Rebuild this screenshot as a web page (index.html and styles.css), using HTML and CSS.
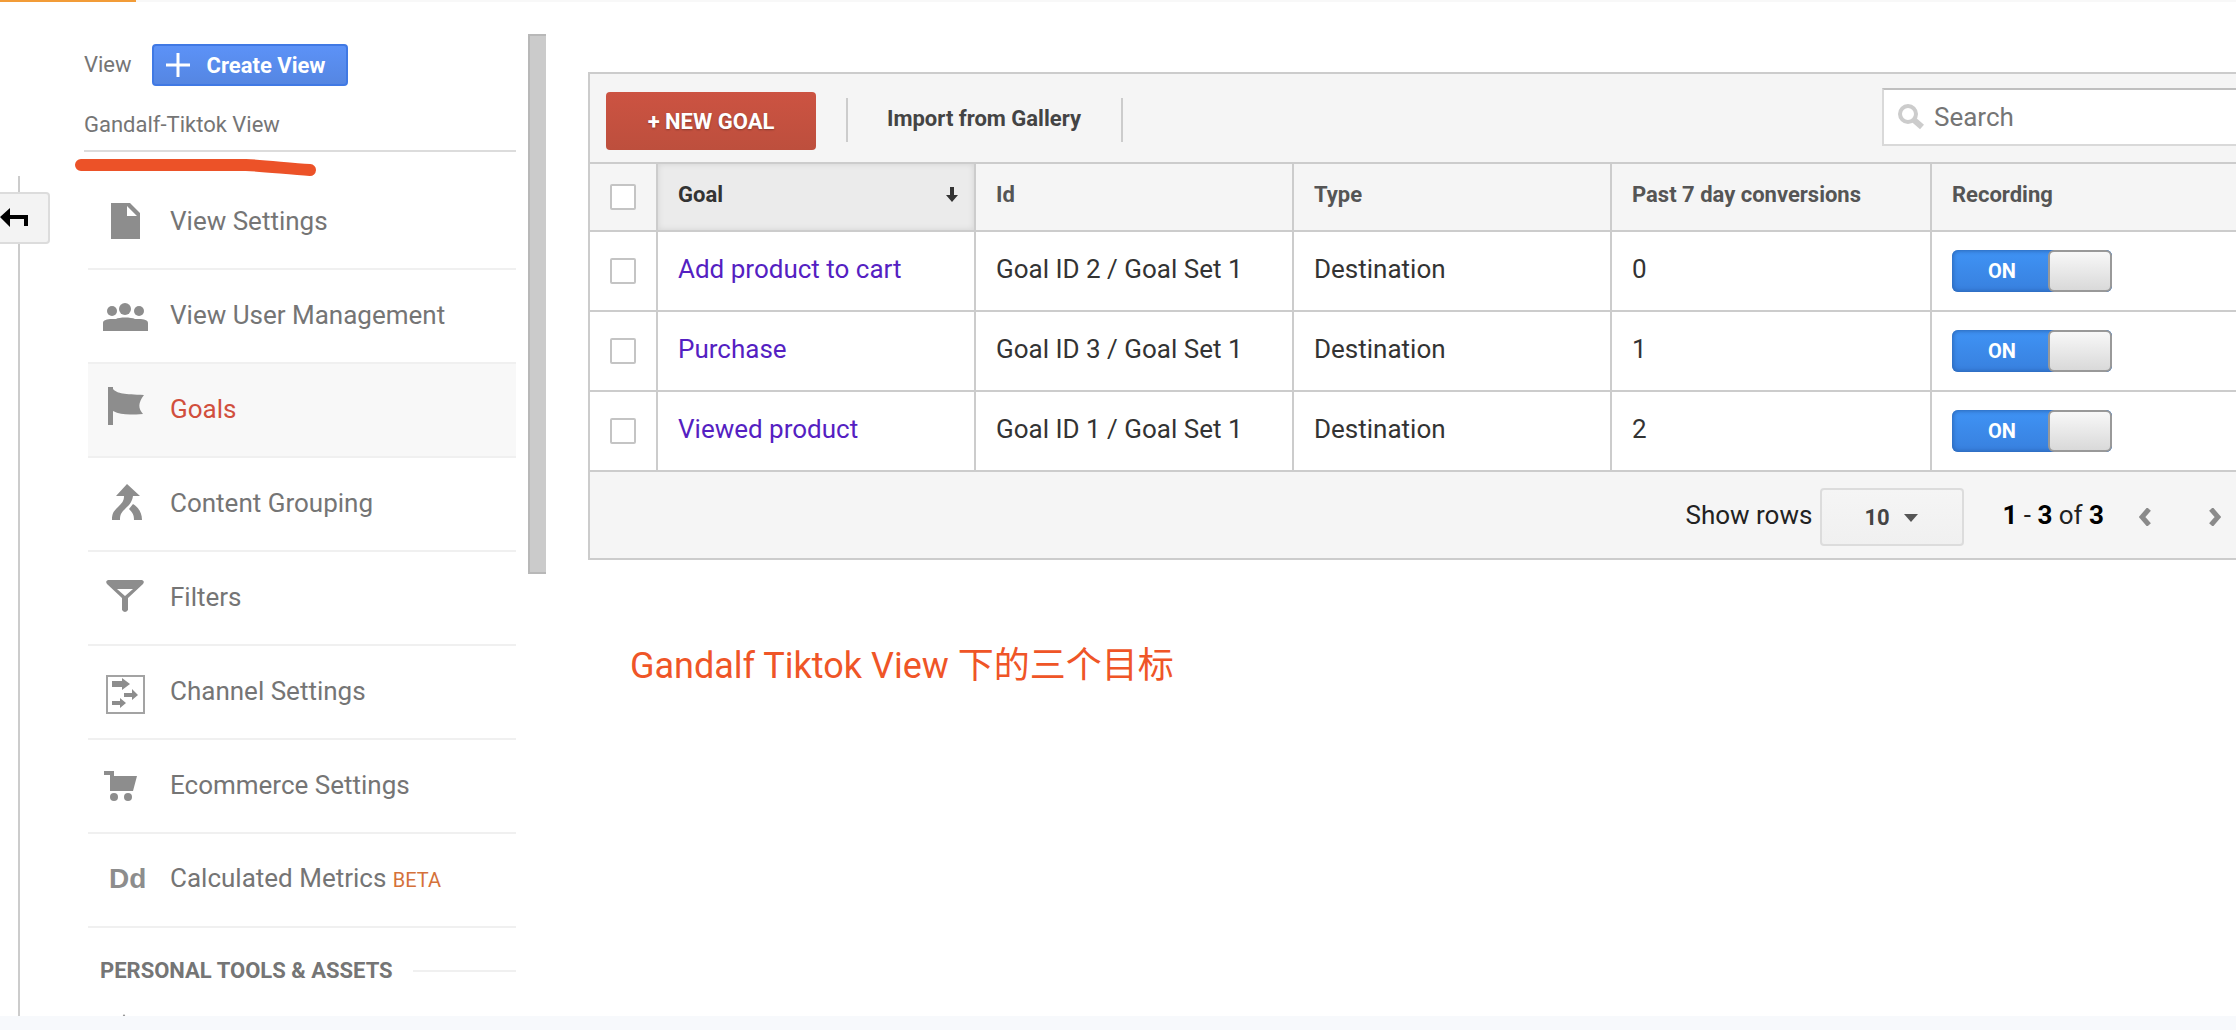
FILE: index.html
```html
<!DOCTYPE html>
<html lang="en">
<head>
    <meta charset="UTF-8">
    <meta name="viewport" content="width=device-width, initial-scale=1.0">
    <title>Goals</title>
    <link rel="stylesheet" href="styles.css">
</head>
<body>
    <div class="progress"><div class="progress-bar"></div></div>

    <div class="page">
        <div class="rail">
            <span class="rail-line rail-line-top"></span>
            <button type="button" class="rail-button" aria-label="Back">
                <svg width="30" height="20" viewBox="0 0 30 20">
                    <path d="M0 9L10 0V7H28V18H24V11H10V19Z" fill="#000"/>
                </svg>
            </button>
            <span class="rail-line"></span>
        </div>

        <aside class="sidebar">
            <div class="view-header">
                <span>View</span>
                <button type="button" class="create-view">
                    <svg width="24" height="24" viewBox="0 0 24 24">
                        <path d="M12 0V24M0 12H24" stroke="#fff" stroke-width="3"/>
                    </svg>
                    Create View
                </button>
            </div>
            <div class="view-name">
                Gandalf-Tiktok View
                <!-- Marker stroke under the view name -->
                <svg class="marker" width="244" height="20" viewBox="0 0 244 20">
                    <path d="M7 7H172C195 8 215 11 236 12" fill="none" stroke="#ec5228" stroke-width="12" stroke-linecap="round" stroke-linejoin="round"/>
                </svg>
            </div>

            <nav class="menu">
                <a href="#" class="menu-item">
                    <svg class="icon" viewBox="0 0 48 48">
                        <path d="M10 6H29L39 16V42H10ZM26 9V19H36Z" fill-rule="evenodd"/>
                    </svg>
                    View Settings
                </a>
                <a href="#" class="menu-item">
                    <svg class="icon" viewBox="0 0 48 48">
                        <circle cx="11" cy="20" r="5"/>
                        <circle cx="24" cy="18" r="6"/>
                        <circle cx="38" cy="20" r="5"/>
                        <path d="M2 40V32C2 29 6 28 11 28L15 28C18 26 30 26 34 28L38 28C43 28 47 29 47 32V40Z"/>
                    </svg>
                    View User Management
                </a>
                <a href="#" class="menu-item active">
                    <svg class="icon" viewBox="0 0 48 48">
                        <path d="M7 2H12V4C17 9 23 9 43 10C37 18 37 23 42 29C27 30 20 30 12 26V40H7Z"/>
                    </svg>
                    Goals
                </a>
                <a href="#" class="menu-item">
                    <svg class="icon" viewBox="0 0 48 48">
                        <path d="M26 5L39 17H32C31 24 27 27 23 31C20 34 19 36 19 41H11C11 34 13 32 17 28C21 24 23 22 23 17H15ZM32 25C38 29 41 34 41 41H33C33 36 32 34 28 30Z"/>
                    </svg>
                    Content Grouping
                </a>
                <a href="#" class="menu-item">
                    <svg class="icon" viewBox="0 0 48 48">
                        <path d="M7 7H41Q44 8 42 11L27 25V37Q24 41 21 37V25L6 11Q4 8 7 7ZM16 16L24 23L32 16Z" fill-rule="evenodd"/>
                    </svg>
                    Filters
                </a>
                <a href="#" class="menu-item">
                    <svg class="icon" viewBox="0 0 48 48">
                        <rect x="6" y="9" width="37" height="37" fill="none" stroke="#a3a3a3" stroke-width="2"/>
                        <path d="M11 14H21V11L29 17L21 23V20H11ZM23 26H31V22L37 28L31 33V30H23ZM11 34H19V31L25 36L19 41V38H11Z"/>
                    </svg>
                    Channel Settings
                </a>
                <a href="#" class="menu-item">
                    <svg class="icon" viewBox="0 0 48 48">
                        <path d="M3 10H13V15H36L32 30H9V14H3Z"/>
                        <circle cx="13" cy="36" r="4"/>
                        <circle cx="27" cy="36" r="4"/>
                    </svg>
                    Ecommerce Settings
                </a>
                <a href="#" class="menu-item">
                    <span class="icon icon-text">Dd</span>
                    <span>Calculated Metrics <small class="beta">BETA</small></span>
                </a>
            </nav>

            <h2 class="section-title">Personal Tools &amp; Assets</h2>
            <a href="#" class="menu-item" aria-label="Segments">
                <svg class="icon" viewBox="0 0 48 48">
                    <path d="M27 6L32 14V40H22V14Z"/>
                </svg>
            </a>
        </aside>

        <div class="scrollbar"></div>

        <main class="content">
            <section class="panel">
                <div class="toolbar">
                    <button type="button" class="new-goal">+ NEW GOAL</button>
                    <button type="button" class="import">Import from Gallery</button>
                    <label class="search">
                        <svg width="26" height="26" viewBox="0 0 26 26">
                            <circle cx="10" cy="10" r="8" fill="none" stroke="#ccc" stroke-width="4"/>
                            <path d="M16 16L24 23" stroke="#ccc" stroke-width="6"/>
                        </svg>
                        <input type="text" placeholder="Search" aria-label="Search">
                    </label>
                </div>

                <table class="goals">
                    <thead>
                        <tr>
                            <th class="col-check"><input type="checkbox" class="check" aria-label="Select all"></th>
                            <th class="col sorted">
                                <div class="sort">
                                    Goal
                                    <svg width="12" height="16" viewBox="0 0 12 16">
                                        <path d="M4 0H8V8H12L6 15L0 8H4Z" fill="#333"/>
                                    </svg>
                                </div>
                            </th>
                            <th class="col">Id</th>
                            <th class="col">Type</th>
                            <th class="col-wide">Past 7 day conversions</th>
                            <th>Recording</th>
                        </tr>
                    </thead>
                    <tbody>
                        <tr>
                            <td class="col-check"><input type="checkbox" class="check" aria-label="Select Add product to cart"></td>
                            <td><a href="#">Add product to cart</a></td>
                            <td>Goal ID 2 / Goal Set 1</td>
                            <td>Destination</td>
                            <td>0</td>
                            <td class="col-toggle">
                                <label class="toggle"><input type="checkbox" checked><span class="toggle-text">ON</span><span class="knob"></span></label>
                            </td>
                        </tr>
                        <tr>
                            <td class="col-check"><input type="checkbox" class="check" aria-label="Select Purchase"></td>
                            <td><a href="#">Purchase</a></td>
                            <td>Goal ID 3 / Goal Set 1</td>
                            <td>Destination</td>
                            <td>1</td>
                            <td class="col-toggle">
                                <label class="toggle"><input type="checkbox" checked><span class="toggle-text">ON</span><span class="knob"></span></label>
                            </td>
                        </tr>
                        <tr>
                            <td class="col-check"><input type="checkbox" class="check" aria-label="Select Viewed product"></td>
                            <td><a href="#">Viewed product</a></td>
                            <td>Goal ID 1 / Goal Set 1</td>
                            <td>Destination</td>
                            <td>2</td>
                            <td class="col-toggle">
                                <label class="toggle"><input type="checkbox" checked><span class="toggle-text">ON</span><span class="knob"></span></label>
                            </td>
                        </tr>
                    </tbody>
                </table>

                <div class="pager">
                    <label for="rows">Show rows</label>
                    <div class="select">
                        <select id="rows">
                            <option>10</option>
                            <option>25</option>
                            <option>50</option>
                        </select>
                        <svg class="caret" width="14" height="8" viewBox="0 0 14 8"><path d="M0 0H14L7 8Z" fill="#555"/></svg>
                    </div>
                    <span class="range"><b>1</b> - <b>3</b> of <b>3</b></span>
                    <button type="button" class="page-button" aria-label="Previous page">
                        <svg width="12" height="18" viewBox="0 0 12 18"><path d="M10 1L3 9L10 17" fill="none" stroke="#8a8a8a" stroke-width="5"/></svg>
                    </button>
                    <button type="button" class="page-button" aria-label="Next page">
                        <svg width="12" height="18" viewBox="0 0 12 18"><path d="M2 1L9 9L2 17" fill="none" stroke="#8a8a8a" stroke-width="5"/></svg>
                    </button>
                </div>
            </section>

            <p class="note">Gandalf Tiktok View 下的三个目标</p>
        </main>
    </div>

    <footer class="bottom"></footer>
</body>
</html>
```
FILE: styles.css
```css
/* Reset and general styling */
* {
    margin: 0;
    padding: 0;
    box-sizing: border-box;
}

body {
    display: flex;
    flex-direction: column;
    height: 100vh;
    overflow: hidden;
    background: #fff;
    color: #333;
    font-family: Roboto, "Noto Sans CJK SC", sans-serif;
    font-size: 26px;
    line-height: 32px;
}

button,
input,
select {
    font-family: inherit;
    border: none;
    cursor: pointer;
}

a {
    text-decoration: none;
}

.progress {
    height: 2px;
    background: #f8f8f8;
    flex: none;
}

.progress-bar {
    width: 136px;
    height: 2px;
    background: #f29c38;
}

.page {
    display: flex;
    flex: 1;
    min-height: 0;
}

.bottom {
    flex: none;
    height: 14px;
    background: #f7f9fc;
}

/* Left rail */
.rail {
    display: flex;
    flex-direction: column;
    width: 50px;
    padding-top: 174px;
}

.rail-line {
    flex: 1;
    width: 2px;
    margin-left: 18px;
    background: #ccc;
}

.rail-line-top {
    flex: none;
    height: 16px;
}

.rail-button {
    display: flex;
    align-items: center;
    height: 52px;
    background: #f3f3f3;
    border: 2px solid #dcdcdc;
    border-left: none;
    border-radius: 0 4px 4px 0;
}

/* Sidebar */
.sidebar {
    width: 478px;
    padding: 42px 12px 0 34px;
    overflow: hidden;
    color: #757575;
}

.view-header {
    display: flex;
    align-items: center;
    gap: 20px;
    font-size: 22px;
}

.create-view {
    display: flex;
    align-items: center;
    gap: 17px;
    height: 42px;
    padding: 0 20px 0 12px;
    border: 2px solid #4079e4;
    border-radius: 4px;
    background: linear-gradient(#5c92f7, #5586e2);
    color: #fff;
    font-size: 22px;
    font-weight: 700;
}

.view-name {
    position: relative;
    margin-top: 23px;
    padding-bottom: 9px;
    border-bottom: 2px solid #dcdcdc;
    font-size: 22px;
}

.marker {
    position: absolute;
    left: -10px;
    top: 49px;
}

.menu {
    margin: 24px 0 0 4px;
}

.menu-item {
    display: flex;
    align-items: center;
    gap: 21px;
    height: 94px;
    padding: 0 0 2px 13px;
    border-bottom: 2px solid #f0f0f0;
    color: #757575;
}

.menu-item.active {
    background: #f8f8f8;
    color: #d14f3d;
}

.icon {
    flex: none;
    width: 48px;
    height: 48px;
    fill: #8d8d8d;
}

.icon-text {
    padding-left: 8px;
    color: #8d8d8d;
    font-family: "Liberation Sans", sans-serif;
    font-size: 28px;
    font-weight: 700;
    line-height: 48px;
}

.beta {
    color: #d5713a;
    font-size: 20px;
}

.section-title {
    display: flex;
    align-items: center;
    gap: 20px;
    margin: 27px 0 0 16px;
    font-size: 22px;
    text-transform: uppercase;
}

.section-title::after {
    content: "";
    flex: 1;
    height: 2px;
    background: #f0f0f0;
}

.scrollbar {
    flex: none;
    width: 18px;
    height: 540px;
    margin-top: 32px;
    background: #cbcbcb;
    border: 2px solid #b8b8b8;
    border-right: none;
}

/* Goals panel */
.content {
    flex: 1;
    min-width: 0;
    padding: 70px 0 0 42px;
}

.panel {
    border: 2px solid #ccc;
    border-right: none;
    background: #f5f5f5;
}

.toolbar {
    display: flex;
    height: 88px;
    padding: 14px 0 14px 16px;
}

.new-goal {
    width: 210px;
    height: 58px;
    margin: 4px 30px 0 0;
    border-radius: 4px;
    background: linear-gradient(#cc5342, #bd4f3d);
    color: #fff;
    font-size: 22px;
    font-weight: 700;
    text-shadow: 0 1px 2px rgba(0, 0, 0, 0.3);
}

.import {
    height: 44px;
    margin-top: 10px;
    padding: 0 40px 4px 39px;
    border-left: 2px solid #ccc;
    border-right: 2px solid #ccc;
    background: none;
    color: #444;
    font-size: 22px;
    font-weight: 700;
}

.search {
    display: flex;
    align-items: center;
    gap: 10px;
    width: 354px;
    height: 58px;
    margin-left: auto;
    padding-left: 14px;
    border: 2px solid #d9d9d9;
    border-top-color: #c0c0c0;
    border-right: none;
    background: #fff;
}

.search input {
    flex: 1;
    min-width: 0;
    outline: none;
    background: none;
    font-size: 26px;
}

.search input::placeholder {
    color: #757575;
}

.goals {
    width: 100%;
    border-spacing: 0;
    table-layout: fixed;
}

.goals th,
.goals td {
    padding: 0 20px 4px;
    border-top: 2px solid #ccc;
    border-left: 2px solid #ccc;
    text-align: left;
}

.goals th {
    height: 68px;
    color: #555;
    font-size: 22px;
}

.goals td {
    height: 80px;
    background: #fff;
}

.goals .col-check {
    width: 66px;
    padding: 0;
    border-left: none;
    text-align: center;
}

.goals .col-toggle {
    padding-bottom: 0;
}

.goals .col {
    width: 318px;
}

.goals .col-wide {
    width: 320px;
}

.goals .sorted {
    padding-right: 16px;
    background: #ebebeb;
    box-shadow: inset 0 0 6px rgba(0, 0, 0, 0.1);
    color: #333;
}

.sort {
    display: flex;
    align-items: center;
    justify-content: space-between;
}

.goals a {
    color: #551fc2;
}

.check {
    display: block;
    appearance: none;
    width: 26px;
    height: 26px;
    margin: 0 auto;
    border: 2px solid #c4c4c4;
    border-radius: 2px;
    background: #fff;
}

/* On / off switch */
.toggle {
    display: flex;
    align-items: center;
    width: 160px;
    height: 42px;
    border-radius: 6px;
    background: linear-gradient(#3f93f5, #3880de);
    box-shadow: inset 0 0 4px 1px #2a66b5;
    cursor: pointer;
}

.toggle input {
    appearance: none;
}

.toggle-text {
    flex: 1;
    padding-left: 4px;
    color: #fff;
    font-size: 20px;
    font-weight: 700;
    text-align: center;
}

.knob {
    width: 64px;
    height: 42px;
    border: 2px solid #999;
    border-radius: 6px;
    background: linear-gradient(#f8f8f8, #d9d9d9);
}

/* Pager */
.pager {
    display: flex;
    align-items: center;
    justify-content: flex-end;
    height: 88px;
    padding-right: 15px;
    border-top: 2px solid #ccc;
    color: #222;
}

.select {
    position: relative;
    margin: 4px 38px 0 8px;
}

.select select {
    appearance: none;
    width: 144px;
    height: 58px;
    padding-left: 42px;
    border: 2px solid #dcdcdc;
    border-radius: 4px;
    background: linear-gradient(#f5f5f5, #f0f0f0);
    color: #444;
    font-size: 22px;
    font-weight: 700;
}

.caret {
    position: absolute;
    right: 46px;
    top: 26px;
}

.range b {
    color: #000;
}

.page-button {
    display: flex;
    margin: 4px 0 0 35px;
    background: none;
}

.page-button + .page-button {
    margin-left: 58px;
}

.note {
    margin: 80px 0 0 42px;
    color: #ef5527;
    font-size: 36px;
    line-height: 52px;
}
```
